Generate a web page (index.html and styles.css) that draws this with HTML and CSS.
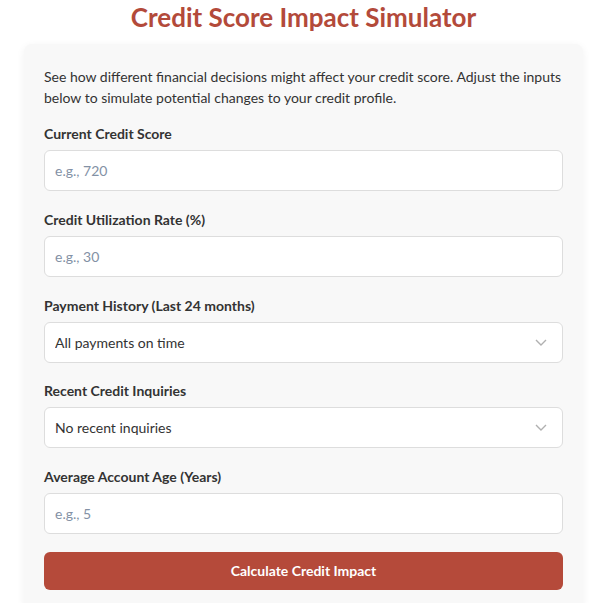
FILE: index.html
```html
<!DOCTYPE html>
<html lang="en">
<head>
    <meta charset="UTF-8">
    <meta name="viewport" content="width=device-width, initial-scale=1.0">
    <title>Credit Score Impact Simulator</title>
    <link rel="stylesheet" href="styles.css">
</head>
<body>
    <div class="wrapper">
        <h1>Credit Score Impact Simulator</h1>

        <div class="card">
            <p class="intro">See how different financial decisions might affect your credit score. Adjust the inputs below to simulate potential changes to your credit profile.</p>

            <form id="simForm">
                <div class="form-group">
                    <label for="currentScore">Current Credit Score</label>
                    <input type="number" id="currentScore" placeholder="e.g., 720">
                </div>

                <div class="form-group">
                    <label for="utilization">Credit Utilization Rate (%)</label>
                    <input type="number" id="utilization" placeholder="e.g., 30">
                </div>

                <div class="form-group">
                    <label for="paymentHistory">Payment History (Last 24 months)</label>
                    <div class="select-wrap">
                        <select id="paymentHistory">
                            <option>All payments on time</option>
                            <option>1 late payment</option>
                            <option>2-3 late payments</option>
                            <option>4+ late payments</option>
                        </select>
                        <svg class="chevron" width="12" height="7" viewBox="0 0 12 7"><path d="M1 1l5 5 5-5" fill="none" stroke="#b0b0b0" stroke-width="1.4"/></svg>
                    </div>
                </div>

                <div class="form-group">
                    <label for="inquiries">Recent Credit Inquiries</label>
                    <div class="select-wrap">
                        <select id="inquiries">
                            <option>No recent inquiries</option>
                            <option>1-2 inquiries</option>
                            <option>3+ inquiries</option>
                        </select>
                        <svg class="chevron" width="12" height="7" viewBox="0 0 12 7"><path d="M1 1l5 5 5-5" fill="none" stroke="#b0b0b0" stroke-width="1.4"/></svg>
                    </div>
                </div>

                <div class="form-group">
                    <label for="accountAge">Average Account Age (Years)</label>
                    <input type="number" id="accountAge" placeholder="e.g., 5">
                </div>

                <button type="button" id="calculate">Calculate Credit Impact</button>
            </form>
        </div>
    </div>
</body>
</html>
```

FILE: styles.css
```css
body {
    font-family: Lato, "Noto Sans", sans-serif;
    margin: 0;
    background-color: #ffffff;
    color: #333;
}
.wrapper {
    width: 559px;
    margin-left: 24px;
}
h1 {
    color: #b34a3a;
    font-size: 26px;
    font-weight: bold;
    text-align: center;
    margin: 0 0 10px;
    line-height: 34px;
}
.card {
    background: #f8f8f8;
    padding: 22px 20px 20px;
    border-radius: 8px;
    box-shadow: 0 2px 8px rgba(0,0,0,0.06);
}
.intro {
    font-size: 14px;
    line-height: 21px;
    margin: 0 0 15px;
    color: #333;
}
.form-group {
    margin-bottom: 17.75px;
}
label {
    display: block;
    font-size: 14px;
    line-height: 21px;
    font-weight: bold;
    color: #333;
    margin-bottom: 6px;
}
input, select {
    width: 100%;
    height: 41px;
    padding: 0 10px;
    border: 1px solid #ddd;
    border-radius: 6px;
    background: #fff;
    font-family: Lato, "Noto Sans", sans-serif;
    font-size: 14px;
    color: #333;
    box-sizing: border-box;
    outline: none;
}
input::placeholder {
    color: #8391a5;
}
input[type="number"] {
    -moz-appearance: textfield;
}
input::-webkit-inner-spin-button {
    -webkit-appearance: none;
}
select {
    appearance: none;
    -webkit-appearance: none;
}
.select-wrap {
    position: relative;
}
.chevron {
    position: absolute;
    right: 16px;
    top: 17px;
    pointer-events: none;
}
button {
    display: block;
    width: 100%;
    height: 38px;
    margin-top: 15px;
    background-color: #b54a3a;
    color: white;
    border: none;
    border-radius: 6px;
    font-family: Lato, "Noto Sans", sans-serif;
    font-size: 14px;
    font-weight: bold;
    cursor: pointer;
}
button:hover {
    background-color: #9e3f31;
}
```
